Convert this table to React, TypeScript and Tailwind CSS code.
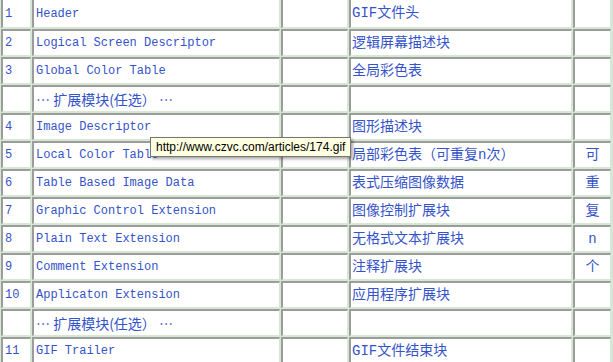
import type { FC } from "react";

type Row = { no: string; name: string; desc: string; extra: string; cjkName?: boolean };

const rows: Row[] = [
    { no: "1", name: "Header", desc: "GIF文件头", extra: "" },
    { no: "2", name: "Logical Screen Descriptor", desc: "逻辑屏幕描述块", extra: "" },
    { no: "3", name: "Global Color Table", desc: "全局彩色表", extra: "" },
    { no: "", name: "… 扩展模块(任选） …", desc: "", extra: "", cjkName: true },
    { no: "4", name: "Image Descriptor", desc: "图形描述块", extra: "" },
    { no: "5", name: "Local Color Table", desc: "局部彩色表（可重复n次）", extra: "可" },
    { no: "6", name: "Table Based Image Data", desc: "表式压缩图像数据", extra: "重" },
    { no: "7", name: "Graphic Control Extension", desc: "图像控制扩展块", extra: "复" },
    { no: "8", name: "Plain Text Extension", desc: "无格式文本扩展块", extra: "n" },
    { no: "9", name: "Comment Extension", desc: "注释扩展块", extra: "个" },
    { no: "10", name: "Applicaton Extension", desc: "应用程序扩展块", extra: "" },
    { no: "", name: "… 扩展模块(任选） …", desc: "", extra: "", cjkName: true },
    { no: "11", name: "GIF Trailer", desc: "GIF文件结束块", extra: "" },
];

// inset cell: dark top/left, light bottom/right
const cell =
    "flex items-center overflow-hidden whitespace-nowrap bg-white border-t-2 border-l-2 border-r border-b border-t-[#9c9c9c] border-l-[#9c9c9c] border-r-[#d4e8d4] border-b-[#d4e8d4] text-[#3553c9]";

const mono = "font-['Liberation_Mono','Noto_Sans_CJK_SC',monospace] text-[12px]";
const cjk = "font-['Liberation_Mono','Noto_Sans_CJK_SC',monospace] text-[14px]";
const cjkFirst = "font-['Noto_Sans_CJK_SC',sans-serif] text-[14px]";

const App: FC = () => {
    return (
        <div className="relative w-[613px] h-[362px] overflow-hidden bg-[#d4e8d4]">
            <div className="grid grid-cols-[30px_248px_67px_223px_38px] grid-rows-[30px_repeat(12,27px)] gap-px pl-px -mt-[2px]">
                {rows.map((r, idx) => (
                    <div key={idx} className="contents">
                        <div className={`${cell} ${mono} pl-[2px]`}>{r.no}</div>
                        <div className={`${cell} ${r.cjkName ? cjkFirst : mono} pl-[2px]`}>{r.name}</div>
                        <div className={cell} />
                        <div className={`${cell} ${cjk} pl-px`}>{r.desc}</div>
                        <div className={`${cell} ${cjk} justify-center`}>{r.extra}</div>
                    </div>
                ))}
            </div>

            {/* browser tooltip over the table */}
            <div className="absolute left-[150px] top-[137px] h-[20px] px-[5px] flex items-center border border-[#767676] bg-[#ffffe1] shadow-[2px_2px_3px_rgba(0,0,0,0.35)] font-['Liberation_Sans',Arial,sans-serif] text-[12px] text-black whitespace-nowrap">
                http://www.czvc.com/articles/174.gif
            </div>
        </div>
    );
};

export default App;
